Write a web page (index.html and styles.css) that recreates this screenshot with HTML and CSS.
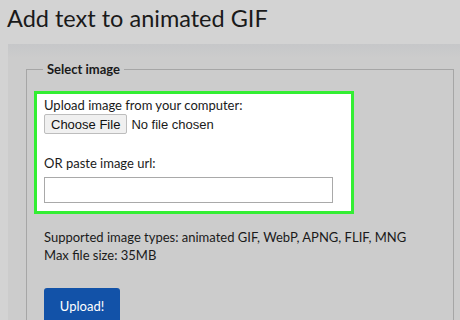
FILE: index.html
```html
<!DOCTYPE html>
<html lang="en">
<head>
    <meta charset="UTF-8">
    <title>Add text to animated GIF</title>
    <link rel="stylesheet" href="styles.css">
</head>
<body>
    <h1>Add text to animated GIF</h1>

    <div class="panel">
        <fieldset class="select-image">
            <legend>Select image</legend>

            <div class="upload-box">
                <label class="field-label">Upload image from your computer:</label>
                <div class="file-row">
                    <button class="choose-file">Choose File</button>
                    <span class="no-file">No file chosen</span>
                </div>

                <label class="field-label url-label">OR paste image url:</label>
                <input type="text" class="url-input">
            </div>

            <p class="info">
                Supported image types: animated GIF, WebP, APNG, FLIF, MNG<br>
                Max file size: 35MB
            </p>

            <button class="upload-button">Upload!</button>
        </fieldset>
    </div>
</body>
</html>
```

FILE: styles.css
```css
body {
    margin: 0;
    padding: 0;
    background-color: #d3d3d3;
    font-family: Lato, "Open Sans", sans-serif;
    color: #1a1a1a;
    overflow: hidden;
}
h1 {
    margin: 0;
    padding: 4px 0 0 7px;
    height: 40px;
    font-size: 23.5px;
    font-weight: 400;
    color: #1a1a1a;
}
.panel {
    margin-left: 8px;
    background: linear-gradient(#c6c7c9, #cccccc 14px);
    padding: 17px 6px 0 18px;
    height: 300px;
}
.select-image {
    margin: 0;
    border: 1px solid #a6a6a6;
    border-bottom: none;
    padding: 12px 10px 0 7px;
}
.select-image legend {
    font-size: 13px;
    font-weight: 700;
    padding: 0 4px;
    margin-left: 9px;
}
.upload-box {
    width: 299px;
    background-color: #fff;
    border: 3px solid #33ee33;
    padding: 2px 8px 8px 7px;
    margin-top: 2px;
}
.field-label {
    display: block;
    font-size: 13px;
    line-height: 18px;
}
.file-row {
    display: flex;
    align-items: center;
    gap: 4px;
}
.choose-file {
    font-family: "Liberation Sans", sans-serif;
    font-size: 13px;
    height: 20px;
    padding: 0 6px;
    background-color: #f0f0f0;
    border: 1px solid #bdbdbd;
    border-radius: 2px;
    color: #111;
}
.no-file {
    font-family: "Liberation Sans", sans-serif;
    font-size: 13px;
}
.url-label {
    margin-top: 20px;
}
.url-input {
    display: block;
    width: 283px;
    height: 24px;
    margin-top: 5px;
    border: 1px solid #a9a9a9;
    padding: 0 2px;
}
.info {
    margin: 14px 0 0 10px;
    font-size: 13px;
    line-height: 18px;
}
.upload-button {
    margin: 24px 0 0 10px;
    width: 76px;
    height: 36px;
    background-color: #1252a8;
    color: #fff;
    border: none;
    border-radius: 3px;
    font-family: Lato, sans-serif;
    font-size: 13px;
}
```
